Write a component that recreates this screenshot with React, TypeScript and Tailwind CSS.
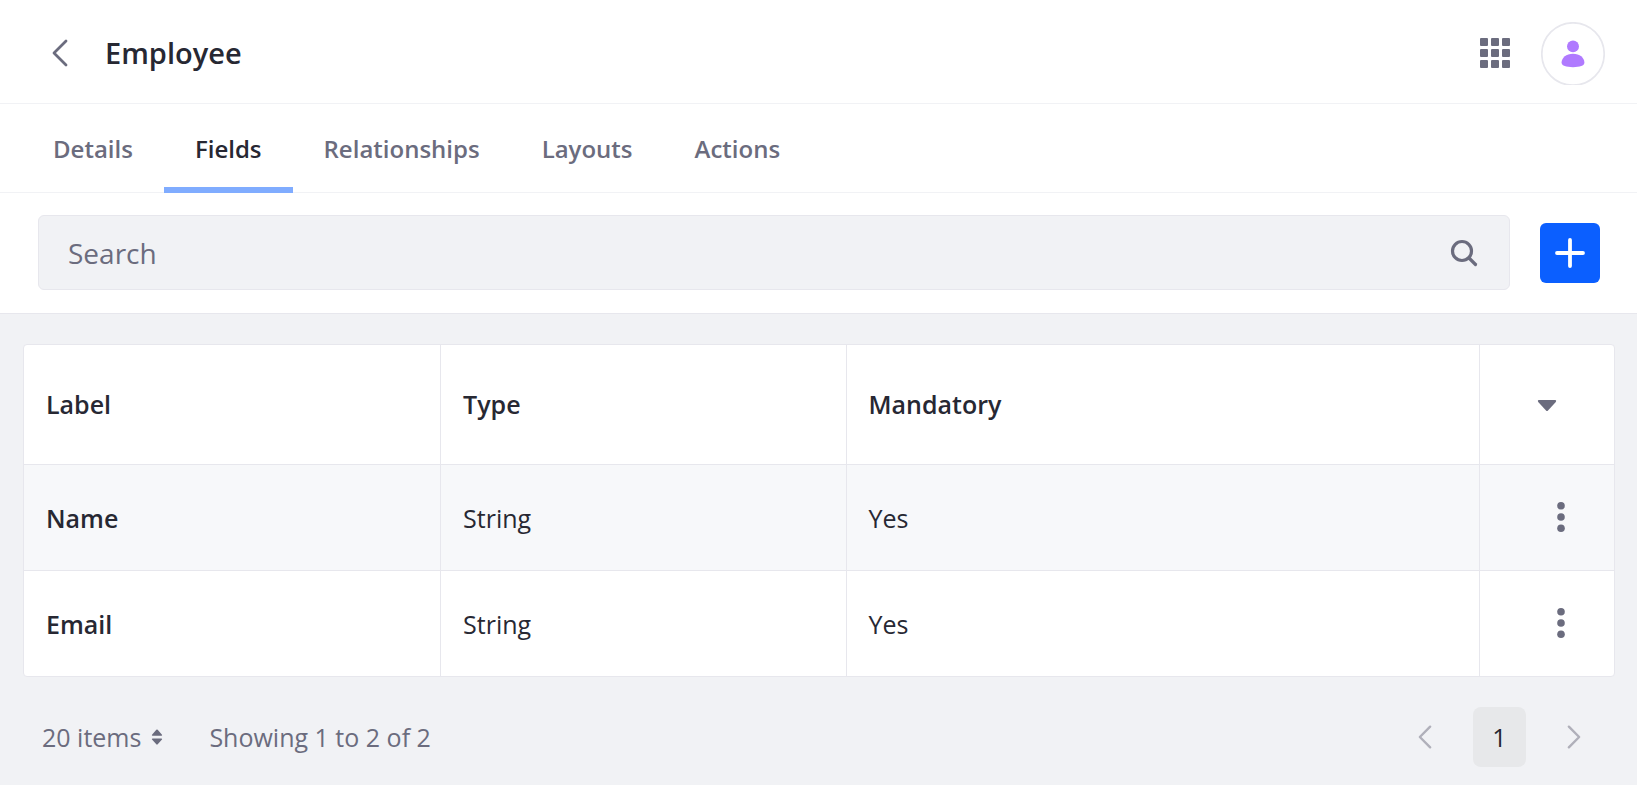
import type { ReactNode } from "react";

type Field = { label: string; type: string; mandatory: string };

const fields: Field[] = [
  { label: "Name", type: "String", mandatory: "Yes" },
  { label: "Email", type: "String", mandatory: "Yes" },
];

const tabs = ["Details", "Fields", "Relationships", "Layouts", "Actions"];

function Chevron({ className, flip }: { className: string; flip?: boolean }) {
  return (
    <svg viewBox="0 0 16 28" className={className} fill="none" stroke="currentColor" strokeWidth="2.8" strokeLinecap="round" strokeLinejoin="round" aria-hidden="true">
      <path d={flip ? "M2 2l12 12L2 26" : "M14 2L2 14l12 12"} />
    </svg>
  );
}

function GridIcon() {
  return (
    <svg viewBox="0 0 30 30" className="size-[30px]" fill="currentColor" aria-hidden="true">
      {[0, 11, 22].map((y) => [0, 11, 22].map((x) => <rect key={`${x}-${y}`} x={x} y={y} width="8" height="8" rx="1" />))}
    </svg>
  );
}

function Avatar() {
  return (
    <svg viewBox="0 0 64 63" className="h-[63px] w-16" aria-hidden="true">
      <circle cx="32" cy="32" r="31.2" fill="#fff" stroke="#e7e7ed" strokeWidth="1.7" />
      <ellipse cx="32" cy="24.4" rx="6" ry="5.8" fill="#b07aff" />
      <path d="M32 31.8c6.800 0 11.400 4 11.400 8.800 0 3.400-4.600 4.600-11.400 4.600s-11.400-1.200-11.400-4.600c0-4.800 4.600-8.800 11.400-8.800z" fill="#b07aff" />
    </svg>
  );
}

function SearchIcon() {
  return (
    <svg viewBox="0 0 28 28" className="size-7" fill="none" stroke="currentColor" strokeLinecap="round" aria-hidden="true">
      <circle cx="12" cy="12" r="9.500" strokeWidth="3.200" />
      <path d="M19 19l6.500 6.500" strokeWidth="3.200" />
    </svg>
  );
}

function KebabIcon() {
  return (
    <svg viewBox="0 0 8 30" className="h-[30px] w-2" fill="currentColor" aria-hidden="true">
      <circle cx="4" cy="3.800" r="3.800" />
      <circle cx="4" cy="15" r="3.800" />
      <circle cx="4" cy="26.200" r="3.800" />
    </svg>
  );
}

function HeaderCell({ children }: { children: ReactNode }) {
  return <th scope="col" className="border-r border-[#e7e7ed] px-[22px] text-left font-semibold">{children}</th>;
}

export default function App() {
  return (
    <div className="flex min-h-screen flex-col bg-[#f1f2f5] font-['Open_Sans','Noto_Sans',sans-serif] text-[25px] leading-9 text-[#272833]">
      <header className="flex h-26 items-center justify-between border-b border-[#f1f2f5] bg-white pt-[3px] pr-8 pl-9">
        <div className="flex items-center gap-[21px]">
          <button type="button" aria-label="Back" className="flex h-12 w-12 items-center justify-center text-[#6b6c7e]">
            <Chevron className="h-7 w-4" />
          </button>
          <h1 className="text-[29px] font-semibold">Employee</h1>
        </div>
        <div className="flex items-center gap-[31px]">
          <button type="button" aria-label="Applications" className="text-[#6b6c7e]"><GridIcon /></button>
          <button type="button" aria-label="User profile"><Avatar /></button>
        </div>
      </header>

      <nav aria-label="Object sections" className="flex h-[89px] border-b border-[#f1f2f5] bg-white pl-[22px] text-2xl">
        {tabs.map((tab) => (
          <a
            key={tab}
            href="#"
            aria-current={tab === "Fields" ? "page" : undefined}
            className={
              tab === "Fields"
                ? "-mb-px flex items-center border-b-6 border-[#80acff] px-[31px] pt-[7px] font-semibold"
                : "flex items-center px-[31px] pt-[2px] font-semibold text-[#6b6c7e]"
            }
          >
            {tab}
          </a>
        ))}
      </nav>

      <div className="flex items-center gap-[30px] border-b border-[#e7e7ed] bg-white pt-[22px] pr-[37px] pb-[23px] pl-[38px]">
        <form role="search" className="flex h-[75px] flex-1 items-center rounded-md border border-[#e7e7ed] bg-[#f1f2f5] pr-[31px]">
          <input type="text" aria-label="Search" placeholder="Search" className="h-full min-w-0 flex-1 bg-transparent pl-[29px] text-[28px] outline-none placeholder:text-[#6b6c7e] placeholder:opacity-100" />
          <button type="submit" aria-label="Submit search" className="text-[#6b6c7e]"><SearchIcon /></button>
        </form>
        <button type="button" aria-label="Add field" className="flex size-15 items-center justify-center rounded-md bg-[#0b5fff] text-white">
          <svg viewBox="0 0 30 30" className="size-[30px]" fill="none" stroke="currentColor" strokeWidth="3.800" strokeLinecap="round" aria-hidden="true">
            <path d="M15 2v26M2 15h26" />
          </svg>
        </button>
      </div>

      <main className="pt-[30px] pr-[22px] pl-[23px]">
        <div className="overflow-hidden rounded border border-[#e7e7ed] bg-white">
          <table className="w-full table-fixed border-collapse">
            <colgroup>
              <col className="w-[26.2%]" />
              <col className="w-[25.5%]" />
              <col />
              <col className="w-[135px]" />
            </colgroup>
            <thead>
              <tr className="h-[119px] border-b border-[#e7e7ed]">
                <HeaderCell>Label</HeaderCell>
                <HeaderCell>Type</HeaderCell>
                <HeaderCell>Mandatory</HeaderCell>
                <th scope="col">
                  <button type="button" aria-label="Choose columns" className="flex w-full justify-center pt-1 text-[#6b6c7e]">
                    <svg viewBox="0 0 20 12" className="h-3 w-5" fill="currentColor" aria-hidden="true">
                      <path d="M1.500 0h17q1.200.8.300 1.900L11 10.400q-1 1-2 0L1.200 1.900Q.3.800 1.500 0z" />
                    </svg>
                  </button>
                </th>
              </tr>
            </thead>
            <tbody>
              {fields.map((field) => (
                <tr key={field.label} className="h-[106px] border-b border-[#e7e7ed] last:border-b-0 odd:bg-[#f7f8fa]">
                  <th scope="row" className="border-r border-[#e7e7ed] px-[22px] pt-[2px] text-left font-semibold">{field.label}</th>
                  <td className="border-r border-[#e7e7ed] px-[22px] pt-[2px]">{field.type}</td>
                  <td className="border-r border-[#e7e7ed] px-[22px] pt-[2px]">{field.mandatory}</td>
                  <td className="pr-[31px]">
                    <button type="button" aria-label={`Actions for ${field.label}`} className="ml-auto flex w-11 justify-center text-[#6b6c7e]"><KebabIcon /></button>
                  </td>
                </tr>
              ))}
            </tbody>
          </table>
        </div>

        <footer className="flex items-center justify-between pt-[30px] pr-[34px] pb-[18px] pl-[19px] text-[#6b6c7e]">
          <div className="flex items-center gap-[46px]">
            <button type="button" className="flex items-center gap-[10px]">
              20 items
              <svg viewBox="0 0 12 16" className="h-4 w-3" fill="currentColor" aria-hidden="true">
                <path d="M1 5.800L5.300.8q.7-.8 1.400 0L11 5.800q.4 1-.5 1h-9q-.9 0-.5-1zM1 10.500l4.300 4.800q.7.800 1.400 0L11 10.500q.4-1-.5-1h-9q-.9 0-.5 1z" />
              </svg>
            </button>
            <p>Showing 1 to 2 of 2</p>
          </div>
          <nav aria-label="Pagination" className="flex items-center gap-[41px]">
            <button type="button" aria-label="Previous page" disabled className="text-[#b0b0ba]"><Chevron className="h-6 w-[14px]" /></button>
            <button type="button" aria-current="page" className="h-15 w-[53px] rounded-lg bg-[#e7e8ea] text-[#272833]">1</button>
            <button type="button" aria-label="Next page" disabled className="text-[#b0b0ba]"><Chevron flip className="h-6 w-[14px]" /></button>
          </nav>
        </footer>
      </main>
    </div>
  );
}
